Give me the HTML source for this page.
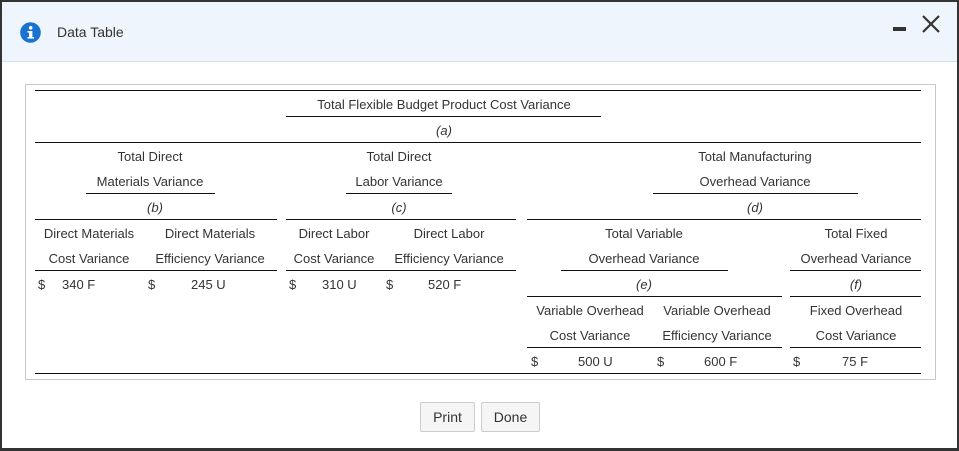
<!DOCTYPE html>
<html><head><style>
body{margin:0;width:959px;height:451px;position:relative;overflow:hidden;background:#fff;font-family:"Liberation Sans",sans-serif;color:#333;font-size:13px}
.frame{position:absolute;left:0;top:0;width:955px;height:446px;border:2px solid #333;border-bottom-width:3px}
.hdr{position:absolute;left:2px;top:2px;width:955px;height:59px;background:#eef5fd;border-bottom:1px solid #cfe0ef}
.l{position:absolute;height:1px;background:#111}
.t{position:absolute;white-space:nowrap;text-align:center;transform:translateX(-50%);line-height:14px}
.n{position:absolute;white-space:nowrap;line-height:14px}
.i{font-style:italic}
.btn{position:absolute;top:402px;height:28px;border:1px solid #ccc;border-radius:2px;background:#f5f5f5;font-size:14px;line-height:28px;text-align:center;color:#333}
</style></head><body>
<div class="frame"></div>
<div class="hdr"></div>
<svg style="position:absolute;left:20px;top:22px" width="21" height="21"><circle cx="10.5" cy="10.5" r="10.3" fill="#1a73d1"/><rect x="9" y="9" width="3.4" height="7.5" fill="#fff"/><rect x="7.5" y="9" width="4" height="1.6" fill="#fff"/><rect x="7.5" y="15" width="6.5" height="1.6" fill="#fff"/><circle cx="10.7" cy="5.8" r="1.8" fill="#fff"/></svg>
<div class="n" style="left:57px;top:25px;font-size:14px">Data Table</div>
<div style="position:absolute;left:893px;top:27px;width:13px;height:4px;background:#333"></div>
<svg style="position:absolute;left:921px;top:14px" width="20" height="20"><path d="M2 2L18 18M18 2L2 18" stroke="#333" stroke-width="2.2"/></svg>
<div style="position:absolute;left:25px;top:84px;width:909px;height:294px;border:1px solid #c8c8c8"></div>

<div class="l" style="left:35px;top:90px;width:886px"></div>
<div class="l" style="left:286px;top:116px;width:315px"></div>
<div class="l" style="left:35px;top:142px;width:886px"></div>
<div class="l" style="left:86px;top:193px;width:129px"></div>
<div class="l" style="left:346px;top:193px;width:106px"></div>
<div class="l" style="left:653px;top:193px;width:205px"></div>
<div class="l" style="left:35px;top:219px;width:242px"></div>
<div class="l" style="left:286px;top:219px;width:230px"></div>
<div class="l" style="left:527px;top:219px;width:394px"></div>
<div class="l" style="left:35px;top:270px;width:242px"></div>
<div class="l" style="left:286px;top:270px;width:230px"></div>
<div class="l" style="left:561px;top:270px;width:167px"></div>
<div class="l" style="left:790px;top:270px;width:131px"></div>
<div class="l" style="left:527px;top:296px;width:255px"></div>
<div class="l" style="left:790px;top:296px;width:131px"></div>
<div class="l" style="left:527px;top:347px;width:255px"></div>
<div class="l" style="left:790px;top:347px;width:131px"></div>
<div class="l" style="left:35px;top:373px;width:886px"></div>

<div class="t" style="left:444px;top:98px">Total Flexible Budget Product Cost Variance</div>
<div class="t i" style="left:444px;top:124px">(a)</div>
<div class="t" style="left:150px;top:150px">Total Direct</div>
<div class="t" style="left:150px;top:175px">Materials Variance</div>
<div class="t i" style="left:155px;top:201px">(b)</div>
<div class="t" style="left:399px;top:150px">Total Direct</div>
<div class="t" style="left:399px;top:175px">Labor Variance</div>
<div class="t i" style="left:399px;top:201px">(c)</div>
<div class="t" style="left:755px;top:150px">Total Manufacturing</div>
<div class="t" style="left:755px;top:175px">Overhead Variance</div>
<div class="t i" style="left:755px;top:201px">(d)</div>

<div class="t" style="left:89px;top:227px">Direct Materials</div>
<div class="t" style="left:89px;top:252px">Cost Variance</div>
<div class="t" style="left:210px;top:227px">Direct Materials</div>
<div class="t" style="left:210px;top:252px">Efficiency Variance</div>
<div class="t" style="left:334px;top:227px">Direct Labor</div>
<div class="t" style="left:334px;top:252px">Cost Variance</div>
<div class="t" style="left:449px;top:227px">Direct Labor</div>
<div class="t" style="left:449px;top:252px">Efficiency Variance</div>
<div class="t" style="left:644px;top:227px">Total Variable</div>
<div class="t" style="left:644px;top:252px">Overhead Variance</div>
<div class="t" style="left:856px;top:227px">Total Fixed</div>
<div class="t" style="left:856px;top:252px">Overhead Variance</div>

<div class="n" style="left:38px;top:278px">$</div><div class="n" style="left:62px;top:278px">340 F</div>
<div class="n" style="left:148px;top:278px">$</div><div class="n" style="left:191px;top:278px">245 U</div>
<div class="n" style="left:289px;top:278px">$</div><div class="n" style="left:322px;top:278px">310 U</div>
<div class="n" style="left:386px;top:278px">$</div><div class="n" style="left:428px;top:278px">520 F</div>
<div class="t i" style="left:644px;top:278px">(e)</div>
<div class="t i" style="left:856px;top:278px">(f)</div>

<div class="t" style="left:590px;top:304px">Variable Overhead</div>
<div class="t" style="left:590px;top:329px">Cost Variance</div>
<div class="t" style="left:717px;top:304px">Variable Overhead</div>
<div class="t" style="left:717px;top:329px">Efficiency Variance</div>
<div class="t" style="left:856px;top:304px">Fixed Overhead</div>
<div class="t" style="left:856px;top:329px">Cost Variance</div>

<div class="n" style="left:531px;top:355px">$</div><div class="n" style="left:578px;top:355px">500 U</div>
<div class="n" style="left:657px;top:355px">$</div><div class="n" style="left:704px;top:355px">600 F</div>
<div class="n" style="left:793px;top:355px">$</div><div class="n" style="left:842px;top:355px">75 F</div>

<div class="btn" style="left:420px;width:53px">Print</div>
<div class="btn" style="left:481px;width:57px">Done</div>
</body></html>
